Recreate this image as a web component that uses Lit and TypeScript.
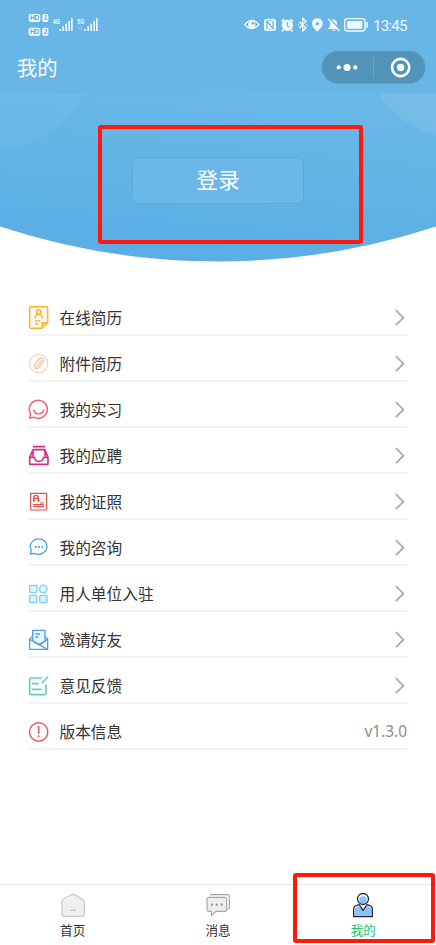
import { LitElement, html, svg, css } from "lit";
import { customElement } from "lit/decorators.js";

const menu = [
  {
    label: "在线简历", y: 33,
    icon: svg`<g fill="none" stroke="#f9b62c" stroke-width="4.6"><path d="M33 35H78Q83 35 83 40V83L66 100H33Q29 100 29 96V39Q29 35 33 35Z" fill="#fffaf0"/><path d="M67 99V83H83" fill="#fbd27c"/><circle cx="56" cy="51" r="6.5"/><path d="M46 70Q47 58 56 58Q66 58 67 70M45 78H61M45 87H55"/></g>`,
  },
  {
    label: "附件简历", y: 171,
    icon: svg`<g fill="none" stroke="#f4cfae" stroke-width="3.4"><circle cx="56" cy="206" r="27.5"/><path stroke="#f1bd92" stroke-linecap="round" d="M62 201L51 214Q46 218 44 213Q43 210 46 206L58 192Q63 187 68 191Q73 196 69 202L57 217Q51 223 45 219M65 197L54 211M49 201L58 192"/></g>`,
  },
  {
    label: "我的实习", y: 309,
    icon: svg`<g fill="none" stroke="#f0646e" stroke-width="4.4" stroke-linecap="round" stroke-linejoin="round"><path d="M29 369L32 357A27 27 0 1 1 43 367Z"/><path d="M41 345A15.5 15.5 0 0 0 71 345"/></g>`,
  },
  {
    label: "我的应聘", y: 42,
    icon: svg`<g fill="none" stroke="#d42c8c" stroke-width="4.8" stroke-linejoin="round"><path d="M39 50H75M39 80V59H75V80M38 62L29 82V103H84V82L76 62"/><path d="M29 82H43Q46 94 57 94Q68 94 71 82H84"/></g>`,
  },
  {
    label: "我的证照", y: 180,
    icon: svg`<g fill="none" stroke="#d9564a" stroke-width="3.7"><rect x="32" y="190" width="48" height="50" rx="2" fill="#fff7f5"/><path d="M41 210V203Q42 196 48 196Q54 196 55 203V210M41 205H55M60 219H72M39 224H72M39 230H72"/><path stroke-width="5" d="M39 212H46M52 212H59"/></g>`,
  },
  {
    label: "我的咨询", y: 318,
    icon: svg`<path d="M31 372L34 361A25 23 0 1 1 44 370Z" fill="none" stroke="#45a8db" stroke-width="3.8" stroke-linejoin="round"/><g fill="#3498d0"><circle cx="47" cy="351" r="3"/><circle cx="57" cy="351" r="3"/><circle cx="67" cy="351" r="3"/></g>`,
  },
  {
    label: "用人单位入驻", y: 36,
    icon: svg`<g fill="#d9f3fc" stroke="#7ccff2" stroke-width="4"><rect x="29" y="46" width="22" height="22" rx="4"/><circle cx="70" cy="57" r="11.5"/><rect x="29" y="76" width="22" height="22" rx="4"/><rect x="59" y="76" width="22" height="22" rx="4"/></g>`,
  },
  {
    label: "邀请好友", y: 174,
    icon: svg`<g fill="none" stroke="#4d9fe8" stroke-width="4" stroke-linejoin="round"><path d="M37 200L29 207V238H83V207L75 200"/><path d="M38 213V181H75V213L57 224Z" fill="#eaf5ff"/><path d="M29 208L83 238M83 208L58 224M46 192H60M46 201H55"/></g>`,
  },
  {
    label: "意见反馈", y: 312,
    icon: svg`<g fill="none" stroke="#62ceb8" stroke-width="4.8" stroke-linecap="round"><path d="M64 324H33Q29 324 29 328V370Q29 374 33 374H73Q78 374 78 369V345M38 341H54M38 358H63M66 339L83 321"/></g>`,
  },
  {
    label: "版本信息", y: 450, value: "v1.3.0",
    icon: svg`<circle cx="56" cy="486" r="27.5" fill="none" stroke="#f05a62" stroke-width="4.4"/><path d="M56 470V490" stroke="#f05a62" stroke-width="5" stroke-linecap="round"/><circle cx="56" cy="499" r="3" fill="#f05a62"/>`,
  },
];

const tabs = [
  {
    label: "首页", box: "178 66 78 78",
    icon: svg`<path d="M189 87L212 74Q217 71 222 74L246 88Q251 91 251 97V132Q251 139 244 139H191Q184 139 184 132V97Q184 90 189 87Z" fill="#efefef" stroke="#c6c6c6" stroke-width="3.5"/><path d="M188 98Q188 92 193 89L207 81" fill="none" stroke="#fff" stroke-width="3"/><path d="M209 121H226" stroke="#b8b8b8" stroke-width="3.4"/>`,
  },
  {
    label: "消息", box: "615 66 78 78",
    icon: svg`<g stroke="#a5a5a5" stroke-width="3.4" stroke-linejoin="round"><path d="M630 74H682Q688 74 688 80V112Q688 117 683 118" fill="none"/><path d="M626 82H674Q680 82 680 88V118Q680 124 674 124H648L634 137V124H626Q621 124 621 118V88Q621 82 626 82Z" fill="#eee"/></g><g fill="#8f8f8f"><circle cx="636" cy="104" r="3.3"/><circle cx="650" cy="104" r="3.3"/><circle cx="665" cy="104" r="3.3"/></g>`,
  },
  {
    label: "我的", box: "197 72 78 78", active: true,
    icon: svg`<path d="M215 119L223 114L236 129L250 114L261 121V145H212V121Z" fill="#8bc2fb"/><path d="M224 111L236 126L249 111Z" fill="#fff"/><circle cx="236" cy="93" r="16" fill="#fff"/><circle cx="236" cy="96" r="11" fill="#8bc2fb"/><g fill="none" stroke="#202a35" stroke-width="4" stroke-linejoin="round"><circle cx="236" cy="93" r="16.5"/><path d="M224 109L236 127L249 109M223 110L213 114Q208 117 208 123V146H264V123Q264 117 259 114L249 110"/></g>`,
  },
];

@customElement("app-root")
export class AppRoot extends LitElement {
  static styles = css`
    :host {
      display: flex;
      flex-direction: column;
      position: relative;
      height: 945px;
      overflow: hidden;
      background: #fff;
      color: #333;
      font-family: "Noto Sans CJK SC", sans-serif;
    }
    svg { display: block; flex: none; }
    .top { height: 93px; flex: none; background: #67b6e6; color: #fff; }
    .status { display: flex; align-items: center; height: 50px; padding: 0 29px 0 28px; box-sizing: border-box; }
    .signals { width: 72px; height: 26px; }
    .indicators { width: 127px; height: 18px; margin-left: auto; margin-right: 3px; }
    .clock { width: 34px; font: 15.2px/18px Roboto, sans-serif; letter-spacing: -0.85px; white-space: nowrap; color: #eef8ff; padding-top: 1px; }
    .bar { display: flex; align-items: center; justify-content: space-between; height: 34px; padding: 0 10px 0 17px; }
    .title { font-size: 20.3px; line-height: 34px; }
    .capsule { width: 105px; height: 34px; }
    .hero { display: grid; height: 169px; flex: none; }
    .hero > * { grid-area: 1 / 1; }
    .login {
      place-self: start center;
      display: flex;
      align-items: center;
      justify-content: center;
      width: 172px;
      height: 47px;
      margin-top: 64px;
      padding: 0 0 3px;
      box-sizing: border-box;
      border: 1px solid #5ea8d6;
      border-radius: 6px;
      background: #6ab7e8;
      color: #fff;
      font: 21.8px/32px "Noto Sans CJK SC", sans-serif;
    }
    .menu { flex: 1; margin: 28px 29px 0 28px; }
    .row { display: flex; align-items: center; height: 46px; padding-top: 12px; box-sizing: border-box; border-bottom: 2px solid #f3f3f3; }
    .icon { width: 22px; height: 24px; }
    .label { flex: 1; margin-left: 9.5px; font-size: 15.7px; line-height: 24px; }
    .chevron { width: 12px; height: 18px; }
    .value { font: 15.4px/24px "Noto Sans", sans-serif; color: #8b8b8b; }
    .tabs { display: flex; height: 61px; flex: none; border-top: 1px solid #e6e6e6; box-sizing: border-box; }
    .tab { flex: 1; display: flex; flex-direction: column; align-items: center; padding-top: 7px; font-size: 12.6px; line-height: 18px; }
    .tab svg { width: 26px; height: 26px; margin-bottom: 3px; }
    .active { color: #27c26c; }
    .mark { position: absolute; box-sizing: border-box; border: 4px solid #fd1a0d; border-radius: 3px; pointer-events: none; }
    .mark-login { left: 98px; top: 125px; width: 265px; height: 119px; }
    .mark-tab { left: 293px; top: 873px; width: 142px; height: 70px; }
  `;

  render() {
    return html`
      <header class="top">
        <div class="status">
          <svg class="signals" viewBox="84 36 216 78" fill="#f3faff">
            <rect x="86" y="42" width="35" height="24" rx="6"/><rect x="127" y="42" width="18" height="24" rx="5"/>
            <rect x="86" y="83" width="35" height="24" rx="6"/><rect x="127" y="83" width="18" height="24" rx="5"/>
            <g fill="#5fa9d6" font-family="Liberation Sans, sans-serif" font-weight="700" font-size="20">
              <text x="90" y="61" textLength="28">HD</text><text x="131" y="61">1</text>
              <text x="90" y="102" textLength="28">HD</text><text x="131" y="102">2</text>
            </g>
            <g font-family="Liberation Sans, sans-serif" font-weight="700" font-size="22">
              <text x="158" y="71" textLength="22" lengthAdjust="spacingAndGlyphs">4G</text>
              <text x="232" y="71" textLength="21" lengthAdjust="spacingAndGlyphs">5G</text>
            </g>
            <path d="M178 87h5v6h-5zM187 79h5v14h-5zM196 71h5v22h-5zM205 63h5v30h-5zM213 55h5v38h-5zM253 87h5v6h-5zM262 79h5v14h-5zM271 71h5v22h-5zM280 63h5v30h-5zM288 55h5v38h-5z"/>
            <path d="M237 80V91M244 80V91M233 84L237 80M244 91L248 87" fill="none" stroke="#a9d7f4" stroke-width="2"/>
          </svg>
          <svg class="indicators" viewBox="75 48 381 54" fill="#f3faff">
            <path d="M80 74Q101 48 123 74Q101 98 80 74Z" fill="none" stroke="#f3faff" stroke-width="4"/><circle cx="101" cy="74" r="11"/><circle cx="105" cy="70" r="4" fill="#67b6e6"/>
            <rect x="138" y="56" width="36" height="37" rx="8"/><path d="M147 87V63L165 86V62" fill="none" stroke="#67b6e6" stroke-width="4"/><path d="M153 62L160 61M152 88L159 88" stroke="#67b6e6" stroke-width="3"/>
            <circle cx="208" cy="76" r="17"/><path d="M191 65L199 57M225 65L217 57M197 89L192 94M219 89L224 94" stroke="#f3faff" stroke-width="5"/><path d="M208 66V77L215 82" fill="none" stroke="#67b6e6" stroke-width="3.5"/>
            <path d="M244 65L264 84L254 93V55L264 64L244 84" fill="none" stroke="#f3faff" stroke-width="4"/><circle cx="242" cy="75" r="2"/><circle cx="266" cy="75" r="2"/>
            <path d="M298 55C308 55 314 62 314 71C314 80 305 87 298 95C291 87 282 80 282 71C282 62 288 55 298 55Z"/><circle cx="298" cy="71" r="5" fill="#67b6e6"/>
            <path d="M329 87L336 78V68Q337 60 344 59Q345 54 348 59Q356 61 357 68V78L364 87ZM341 89H353Q347 97 341 89Z"/><path d="M334 54L367 90" stroke="#67b6e6" stroke-width="4"/><path d="M331 57L364 93" stroke="#f3faff" stroke-width="4"/>
            <rect x="380" y="56" width="61" height="37" rx="8" fill="none" stroke="#f3faff" stroke-width="4"/><rect x="387" y="63" width="46" height="23" rx="2"/><rect x="445" y="66" width="5" height="17" rx="2"/>
          </svg>
          <span class="clock">13:45</span>
        </div>
        <div class="bar">
          <span class="title">我的</span>
          <svg class="capsule" viewBox="0 0 105 34">
            <rect x=".7" y=".8" width="103.8" height="33" rx="16.5" fill="#5293b9" stroke="#65a9d2"/>
            <path d="M52.5 7V28" stroke="#6aa6c9"/>
            <g fill="#fff"><circle cx="17.7" cy="17.4" r="2.1"/><circle cx="26" cy="17.4" r="3.5"/><circle cx="34.3" cy="17.4" r="2.1"/><circle cx="79.6" cy="17.5" r="3.7"/></g>
            <circle cx="79.6" cy="17.5" r="8.6" fill="none" stroke="#fff" stroke-width="2.6"/>
          </svg>
        </div>
      </header>
      <section class="hero">
        <svg width="436" height="169" viewBox="0 93 436 169">
          <defs>
            <linearGradient id="sky" x1=".65" y1="0" x2=".4" y2="1"><stop offset="0" stop-color="#6ab8e8"/><stop offset=".5" stop-color="#62b3e5"/><stop offset="1" stop-color="#5aaee5"/></linearGradient>
            <clipPath id="dome"><path d="M0 93H436V226.5A696 696 0 0 1 0 226.5Z"/></clipPath>
          </defs>
          <g clip-path="url(#dome)">
            <rect y="93" width="436" height="169" fill="url(#sky)"/>
            <circle cx="-10" cy="49" r="103" fill="#fff" opacity=".045"/>
            <circle cx="460" cy="40" r="98" fill="#fff" opacity=".08"/>
          </g>
        </svg>
        <button class="login">登录</button>
      </section>
      <main class="menu">
        ${menu.map((m) => html`
          <div class="row">
            <svg class="icon" viewBox="24 ${m.y} 66 72">${m.icon}</svg>
            <span class="label">${m.label}</span>
            ${m.value
              ? html`<span class="value">${m.value}</span>`
              : html`<svg class="chevron" viewBox="0 0 12 18"><path d="M.9 1.2L8.4 8.7L.9 16.2" fill="none" stroke="#aaa" stroke-width="1.8"/></svg>`}
          </div>`)}
      </main>
      <nav class="tabs">
        ${tabs.map((t) => html`
          <div class="tab ${t.active ? "active" : ""}">
            <svg viewBox=${t.box}>${t.icon}</svg>
            <span>${t.label}</span>
          </div>`)}
      </nav>
      <div class="mark mark-login"></div>
      <div class="mark mark-tab"></div>
    `;
  }
}
